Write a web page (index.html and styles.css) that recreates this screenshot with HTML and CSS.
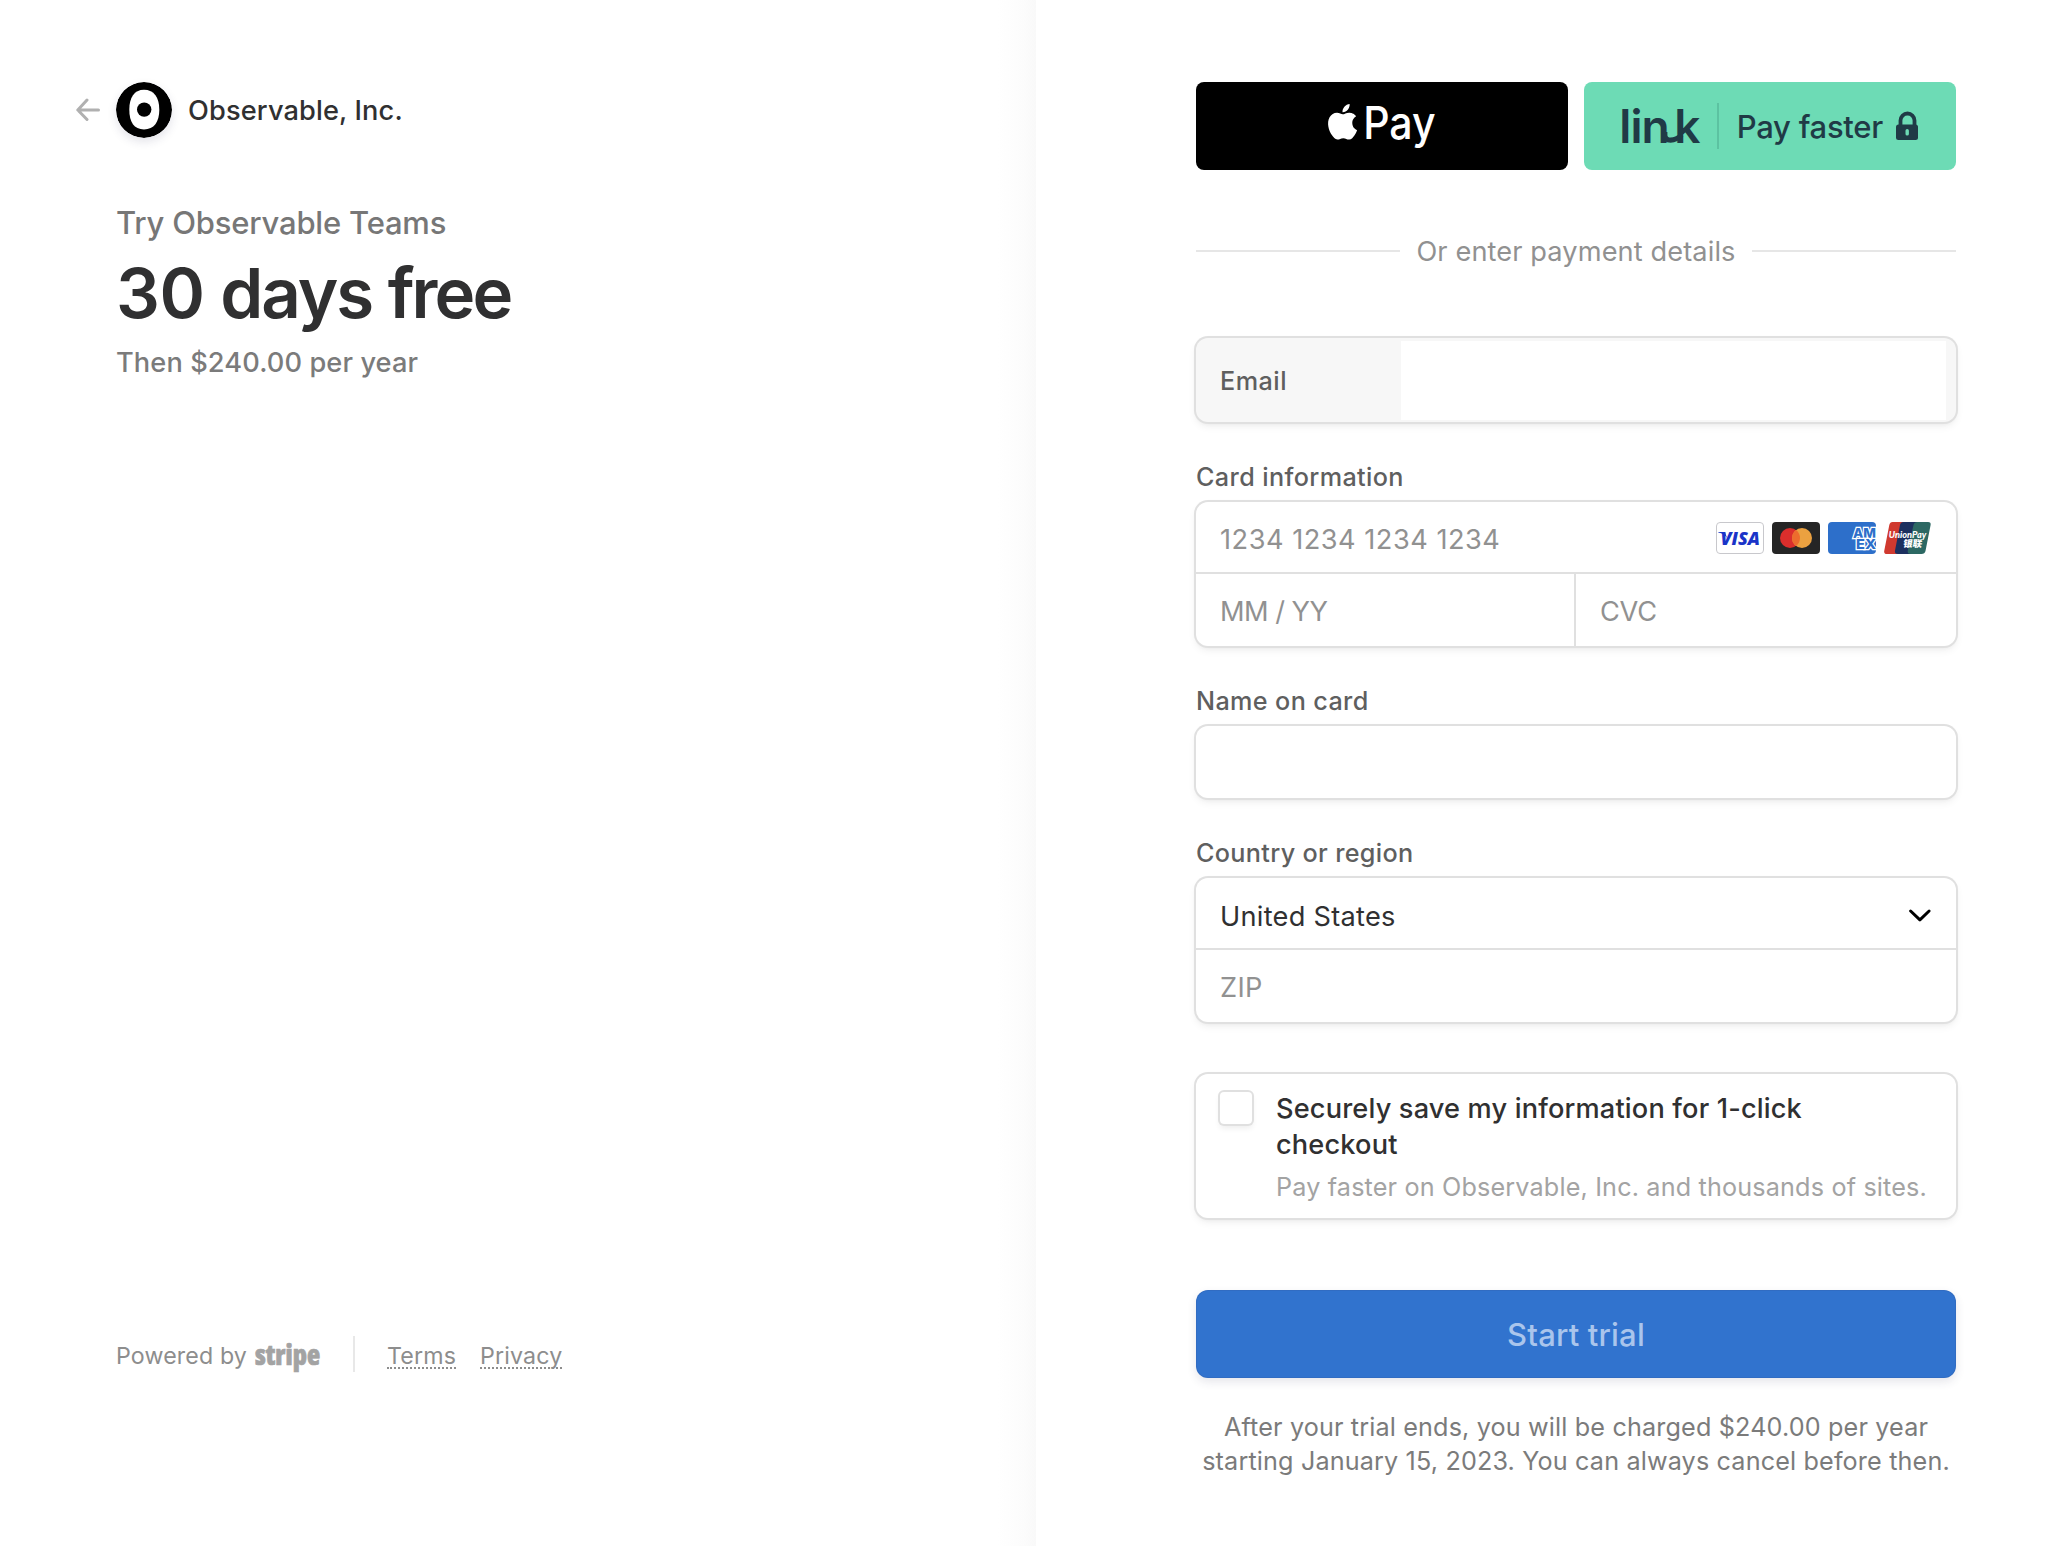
FILE: index.html
```
<!DOCTYPE html>
<html lang="en">
<head>
<meta charset="utf-8">
<title>Observable, Inc.</title>
<link rel="stylesheet" href="styles.css">
</head>
<body>
<div class="page">
  <section class="summary">
    <header class="merchant">
      <svg class="back" width="24" height="24" viewBox="0 0 24 24" fill="none" stroke="#b0b0b0" stroke-width="3" stroke-linecap="round" stroke-linejoin="round"><path d="M22.5 12H2M11 2L1.8 12L11 21.5"/></svg>
      <svg class="logo" width="56" height="56" viewBox="0 0 56 56"><circle cx="28" cy="28" r="28"/><path fill="#fff" d="M28 7.8C38 7.8 43.3 15.6 43.3 27.7S38 47.4 28 47.4S13.3 39.8 13.3 27.7S18.300 7.800 28 7.800Z"/><circle cx="28.200" cy="27.600" r="7.200"/></svg>
      <span class="merchant-name">Observable, Inc.</span>
    </header>
    <div class="plan">Try Observable Teams</div>
    <h1 class="offer"><span class="count">30</span> days <span class="free">free</span></h1>
    <div class="price">Then $240.00 per year</div>
    <footer class="footer">
      <span class="powered">Powered by</span>
      <svg class="stripe" width="68" height="44" viewBox="0 0 68 44"><text x="2" y="32.500" textLength="65" lengthAdjust="spacingAndGlyphs">stripe</text></svg>
      <span class="rule"></span>
      <a class="legal">Terms</a>
      <a class="legal">Privacy</a>
    </footer>
  </section>

  <main class="payment">
    <div class="wallets">
      <div class="wallet apple">
        <svg width="372" height="88" viewBox="0 0 372 88" fill="#fff">
          <path transform="translate(128.800 22.100) scale(1.480)" d="M12.152 6.896c-.948 0-2.415-1.078-3.96-1.04-2.04.027-3.91 1.183-4.961 3.014-2.117 3.675-.546 9.103 1.519 12.090 1.013 1.454 2.208 3.090 3.792 3.039 1.520-.065 2.090-.987 3.935-.987 1.831 0 2.350.987 3.960.948 1.637-.026 2.676-1.480 3.676-2.948 1.156-1.688 1.636-3.325 1.662-3.415-.039-.013-3.182-1.221-3.220-4.857-.026-3.040 2.480-4.494 2.597-4.559-1.429-2.090-3.623-2.324-4.390-2.376-2-.156-3.675 1.090-4.610 1.090zM15.530 3.830c.843-1.012 1.400-2.427 1.245-3.830-1.207.052-2.662.805-3.532 1.818-.780.896-1.454 2.338-1.273 3.714 1.338.104 2.715-.688 3.559-1.701"/>
          <text class="apple-text" x="167.200" y="57.200" textLength="72.500" lengthAdjust="spacingAndGlyphs">Pay</text>
        </svg>
      </div>
      <div class="wallet link">
        <svg width="372" height="88" viewBox="0 0 372 88" fill="#203a46">
          <text class="link-text" x="35.200 46.500 57.400 90.300" y="60.600">link</text>
          <path d="M80.800 50V53.500Q81.300 58.200 86.500 58.200Q92.500 58 97.500 53" fill="none" stroke="#203a46" stroke-width="5.200"/>
          <rect x="133" y="21" width="2" height="46" fill="#5cc2a1"/>
          <text class="link-cta" x="152.800" y="56">Pay faster</text>
          <path d="M316.500 44V38.500A7 7 0 0 1 330.500 38.500V44" fill="none" stroke="#203a46" stroke-width="3.800"/>
          <rect x="312" y="42.500" width="22" height="15.500" rx="2.500"/>
          <rect x="321.500" y="47" width="3.400" height="6.600" rx="1.700" fill="#6ddbb5"/>
        </svg>
      </div>
    </div>

    <div class="divider"><span>Or enter payment details</span></div>

    <div class="box email">
      <label>Email</label>
      <div class="email-field"></div>
    </div>

    <div class="label card-label">Card information</div>
    <div class="box">
      <div class="row number">
        <span class="hint wide">1234 1234 1234 1234</span>
        <div class="brands">
          <svg width="48" height="32" viewBox="0 0 48 32"><rect x=".5" y=".5" width="47" height="31" rx="3.500" fill="#fff" stroke="#c8c8cc"/><text class="visa" x="4.500" y="22.600" textLength="39.500" lengthAdjust="spacingAndGlyphs">VISA</text><path fill="#1a34c8" d="M2.300 10.100H9L11 16C9 12.900 6.500 11.300 2.300 10.500Z"/></svg>
          <svg width="48" height="32" viewBox="0 0 48 32"><rect width="48" height="32" rx="4" fill="#252525"/><circle cx="18" cy="16" r="10" fill="#db2e2c"/><circle cx="30" cy="16" r="10" fill="#eba140"/><path fill="#ed6c2d" d="M24 8A10 10 0 0 1 24 24A10 10 0 0 1 24 8Z"/></svg>
          <svg width="48" height="32" viewBox="0 0 48 32"><rect width="48" height="32" rx="4" fill="#2d6fca"/><text class="amex" x="25" y="15.800" textLength="23" lengthAdjust="spacingAndGlyphs">AM</text><text class="amex" x="28" y="26.600" textLength="20" lengthAdjust="spacingAndGlyphs">EX</text></svg>
          <svg width="48" height="32" viewBox="0 0 48 32"><path fill="#d0392f" d="M8.500 0H20L14 32H3Q-.500 32 .300 28.500L5.300 3Q6 0 8.500 0Z"/><path fill="#1c305f" d="M19.500 0H34L28 32H14Q10.300 32 11 28.500L16 3Q16.600 0 19.500 0Z"/><path fill="#2c6863" d="M33.500 0H44Q47.200 0 46.600 3L41.500 29Q40.800 32 37.500 32H27Q23 32 23.800 28.500L29.500 3Q30.200 0 33.500 0Z"/><text class="union" x="4.800" y="15.600" textLength="37.500" lengthAdjust="spacingAndGlyphs">UnionPay</text><text class="union-cn" x="19" y="25.300" transform="skewX(-8) translate(3.400 0)">银联</text></svg>
        </div>
      </div>
      <div class="row split">
        <div class="cell"><span class="hint expiry">MM / YY</span></div>
        <div class="cell"><span class="hint cvc">CVC</span></div>
      </div>
    </div>

    <div class="label name-label">Name on card</div>
    <div class="box name"></div>

    <div class="label country-label">Country or region</div>
    <div class="box">
      <div class="row country">
        <span>United States</span>
        <svg width="24" height="16" viewBox="0 0 24 16" fill="none" stroke="#000" stroke-width="3" stroke-linecap="round" stroke-linejoin="round"><path d="M2.600 3L11.900 11.800L21.100 3"/></svg>
      </div>
      <div class="row zip"><span class="hint">ZIP</span></div>
    </div>

    <div class="box save">
      <div class="checkbox"></div>
      <div class="save-text">
        <div class="save-title">Securely save my information for 1-click<br>checkout</div>
        <div class="save-note">Pay faster on Observable, Inc. and thousands of sites.</div>
      </div>
    </div>

    <button class="submit">Start trial</button>
    <p class="terms">After your trial ends, you will be charged $240.00 per year<br>starting January 15, 2023. You can always cancel before then.</p>
  </main>
</div>
</body>
</html>
```
FILE: styles.css
```
* { box-sizing: border-box; }

body {
  margin: 0;
  background: #fff;
  font-family: Inter, "Noto Sans CJK SC", sans-serif;
  font-size: 27.2px;
  color: #303031;
}

svg { display: block; flex: none; }

.page { display: flex; height: 1546px; overflow: hidden; }

/* Order summary */
.summary {
  display: flex;
  flex-direction: column;
  width: 1036px;
  padding: 82px 0 174px 76px;
  background: linear-gradient(to left, #f9f9f9, #fcfcfc 12px, #fff 38px);
}
.merchant { display: flex; align-items: center; height: 56px; }
.logo { margin: 0 16px; border-radius: 50%; box-shadow: 0 4px 10px rgba(50, 50, 93, .13); }
.merchant-name { font-weight: 500; letter-spacing: .136px; }
.plan {
  margin: 65px 0 0 40px;
  line-height: 40px;
  font-size: 31px;
  font-weight: 500;
  letter-spacing: -.2px;
  color: #777;
}
.offer {
  margin: 8px 0 0 40px;
  line-height: 84px;
  font-size: 69px;
  font-weight: 600;
  letter-spacing: -2px;
}
.count { letter-spacing: -.3px; }
.free { letter-spacing: -2.900px; }
.price {
  margin: 10px 0 0 40px;
  line-height: 36px;
  font-weight: 500;
  letter-spacing: .104px;
  color: #7b7b7b;
}
.footer {
  display: flex;
  align-items: center;
  height: 36px;
  margin: auto 0 0 40px;
  font-size: 23.2px;
  letter-spacing: .14px;
  color: #8d8d8d;
}
.powered { padding-top: 3px; margin-right: 6px; }
.stripe { overflow: visible; }
.stripe text {
  font: 800 29px "Open Sans", sans-serif;
  font-stretch: 75%;
  letter-spacing: 0;
  fill: #a3a3a3;
  stroke: #a3a3a3;
  stroke-width: .7px;
}
.rule { width: 2px; height: 36px; margin: 0 32px 0 32px; background: #e8e8e8; }
.legal {
  margin: 5px 24px 0 0;
  line-height: 22px;
  border-bottom: 2px dotted #8d8d8d;
}

/* Payment form */
.payment { width: 1026px; padding: 82px 106px 0 160px; }
.wallets { display: flex; gap: 16px; }
.wallet { width: 372px; height: 88px; border-radius: 8px; overflow: hidden; }
.apple { background: #000; }
.link { background: #6ddbb5; }
.apple-text { font-size: 45px; font-weight: 500; }
.link-text { font-size: 46px; font-weight: 600; }
.link-cta { font-size: 31px; font-weight: 500; letter-spacing: -.28px; }

.divider {
  display: flex;
  align-items: center;
  gap: 16px;
  height: 36px;
  margin-top: 63px;
  color: #919191;
  letter-spacing: .103px;
}
.divider::before, .divider::after { content: ""; flex: 1; height: 2px; background: #e6e6e6; }

.box {
  border-radius: 12px;
  background: #fff;
  box-shadow: 0 0 0 2px #e0e0e0, 0 4px 8px rgba(0, 0, 0, .07), 0 2px 4px rgba(0, 0, 0, .04);
}
.email {
  display: flex;
  align-items: center;
  height: 84px;
  margin-top: 69px;
  padding: 1px 10px 0 24px;
  background: #f7f7f7;
  font-size: 25.2px;
  font-weight: 500;
  letter-spacing: .5px;
  color: #5f5f5f;
}
.email-field { width: 545px; height: 79px; margin-left: auto; background: #fff; }

.label {
  height: 32px;
  line-height: 32px;
  font-size: 25.2px;
  font-weight: 500;
  letter-spacing: .37px;
  color: #5f5f5f;
}
.card-label { margin: 39px 0 9px; }
.name-label { margin: 39px 0 9px; }
.country-label { margin: 39px 0 9px; letter-spacing: .326px; }

.row { display: flex; align-items: center; height: 72px; padding: 0 24px; }
.hint { color: #919191; }
.wide { letter-spacing: .5px; }
.expiry { letter-spacing: -.527px; }
.cvc { letter-spacing: -.25px; }
.number { justify-content: space-between; border-bottom: 2px solid #e0e0e0; }
.number .hint { padding-top: 4px; }
.brands { display: flex; gap: 8px; padding-top: 2px; }
.visa { font: italic 800 17.500px "Open Sans", sans-serif; fill: #1a34c8; }
.amex { font: 800 13.500px Inter, sans-serif; fill: #2d6fca; stroke: #fff; stroke-width: 2.400px; paint-order: stroke; }
.union { font: italic 900 10px Lato, sans-serif; fill: #fff; }
.union-cn { font: 900 9.500px "Noto Sans CJK SC", sans-serif; fill: #fff; }
.row.split { padding: 0; align-items: stretch; }
.cell { display: flex; align-items: center; width: 380px; padding: 2px 24px 0; }
.cell:first-child { border-right: 2px solid #e0e0e0; }
.name { height: 72px; }
.country {
  padding-top: 6px;
  justify-content: space-between;
  border-bottom: 2px solid #e0e0e0;
  letter-spacing: .26px;
}
.zip { padding-top: 2px; letter-spacing: .3px; }

.save { display: flex; height: 144px; margin-top: 52px; padding: 16px 0 0 24px; }
.checkbox {
  width: 32px;
  height: 32px;
  margin-top: 2px;
  border-radius: 4px;
  box-shadow: 0 0 0 2px #e0e0e0, 0 4px 6px rgba(0, 0, 0, .08);
}
.save-text { margin: 1px 0 0 24px; white-space: nowrap; }
.save-title { line-height: 36px; font-weight: 500; letter-spacing: .155px; }
.save-note { margin-top: 8px; line-height: 33px; font-size: 25.2px; letter-spacing: .16px; color: #a3a3a3; }

.submit {
  display: block;
  width: 760px;
  height: 88px;
  margin-top: 72px;
  padding: 1px 0 0;
  border: 0;
  border-radius: 12px;
  background: #3173ce;
  box-shadow: inset 0 0 0 1px rgba(50, 50, 93, .1), 0 4px 10px rgba(50, 50, 93, .12);
  font: 500 31px Inter, sans-serif;
  letter-spacing: .179px;
  color: #aac5ec;
}
.terms {
  margin: 32px -10px 0;
  line-height: 34px;
  font-size: 25.2px;
  text-align: center;
  letter-spacing: .145px;
  color: #7b7b7b;
}
```
